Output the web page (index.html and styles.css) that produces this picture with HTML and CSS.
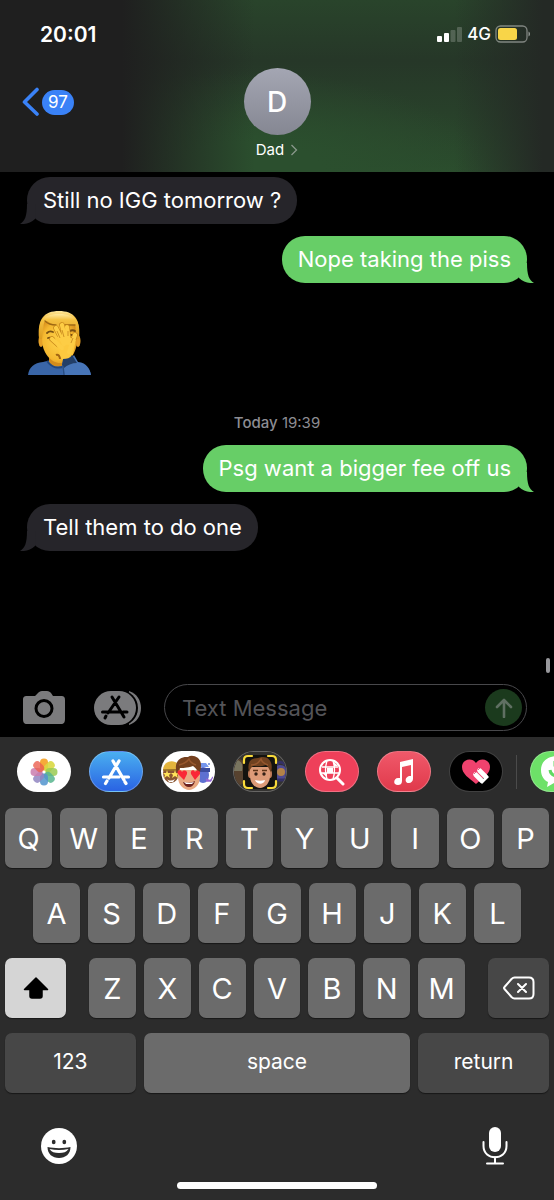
FILE: index.html
```html
<!DOCTYPE html>
<html lang="en">
<head>
    <meta charset="UTF-8">
    <meta name="viewport" content="width=device-width, initial-scale=1.0">
    <title>Dad - Messages</title>
    <link rel="stylesheet" href="styles.css">
</head>
<body>
<header class="header">
    <div class="status-bar">
        <span class="time">20:01</span>
        <div class="status-icons">
            <svg width="26" height="16" viewBox="0 0 26 16">
                <rect x="0" y="10" width="5" height="6" rx="1" fill="#fff"/>
                <rect x="7" y="7" width="5" height="9" rx="1" fill="#fff"/>
                <rect x="13.500" y="4" width="5" height="12" rx="1" fill="#fff" opacity=".2"/>
                <rect x="20" y="1" width="5" height="15" rx="1" fill="#fff" opacity=".2"/>
            </svg>
            <span class="network">4G</span>
            <svg width="36" height="18" viewBox="0 0 36 18">
                <rect x="1" y="1" width="31" height="16" rx="4.500" fill="none" stroke="#fff" stroke-opacity=".42" stroke-width="1.300"/>
                <rect x="3" y="3" width="19" height="12" rx="2.500" fill="#f8d548"/>
                <path d="M33.500 6.500c2 .7 2 4.300 0 5z" fill="#fff" opacity=".5"/>
            </svg>
        </div>
    </div>
    <div class="nav-bar">
        <button type="button" class="back" aria-label="Back, 97 unread">
            <svg width="18" height="30" viewBox="0 0 18 30"><path d="M15 2.500L2.500 15 15 27" fill="none" stroke="#3a82f7" stroke-width="3.600" stroke-linecap="round" stroke-linejoin="round"/></svg>
            <span class="unread">97</span>
        </button>
        <button type="button" class="contact">
            <span class="avatar">D</span>
            <span class="contact-name">Dad
                <svg width="8" height="12" viewBox="0 0 8 12"><path d="M1.500 1L6.500 6 1.500 11" fill="none" stroke="#8a988b" stroke-width="1.300"/></svg>
            </span>
        </button>
    </div>
</header>

<main class="messages">
    <p class="bubble received">Still no IGG tomorrow ?
        <svg class="tail" viewBox="0 0 16 20"><path d="M9 0C9 12 11 17 16 20 11 20.500 5 19 1 15L0 0z"/></svg>
    </p>
    <p class="bubble sent">Nope taking the piss
        <svg class="tail" viewBox="0 0 16 20"><path d="M9 0C9 12 11 17 16 20 11 20.500 5 19 1 15L0 0z"/></svg>
    </p>
    <!-- facepalm -->
    <svg class="facepalm" viewBox="0 0 64 66" role="img" aria-label="Man facepalming">
        <defs>
            <linearGradient id="hair" x1="0" y1="0" x2="0" y2="1">
                <stop offset="0" stop-color="#ffe9a0"/>
                <stop offset=".25" stop-color="#f5c242"/>
                <stop offset="1" stop-color="#dd9d20"/>
            </linearGradient>
            <radialGradient id="skin" cx=".45" cy=".5" r=".6">
                <stop offset="0" stop-color="#ffd24a"/>
                <stop offset=".7" stop-color="#f5b931"/>
                <stop offset="1" stop-color="#d98f1c"/>
            </radialGradient>
        </defs>
        <path d="M0 65c1-8 6-12 15-13l12-3 12 2c12 1 23 5 24 14z" fill="#3a66a8"/>
        <path d="M21 46h18v6c-4 6-15 6-18 0z" fill="#d38c1d"/>
        <path d="M19 51c5 7 12 8 18 5" fill="none" stroke="#23487f" stroke-width="2"/>
        <ellipse cx="13" cy="31" rx="2.500" ry="6" fill="#e6a027"/>
        <ellipse cx="50" cy="31" rx="2.500" ry="6" fill="#e6a027"/>
        <path d="M11 29C9 9 16 1 31 1s22 8 20 28z" fill="url(#hair)"/>
        <path d="M16 12c7-2 25-2 31 1l2 17c0 13-8 23-17 23S14 43 14 29z" fill="url(#skin)"/>
        <path d="M13 27c-1-7 1-12 5-17 7 6 17 7 29 5 3 3 4 7 3 12 3-14-1-23-19-23S9 13 13 27z" fill="url(#hair)"/>
        <path d="M17 11c3 3 7 4 11 4M47 15H37" fill="none" stroke="#9d6814" stroke-width="1.400" stroke-linecap="round"/>
        <path d="M19 23c2-2 4-2 6-1M20 28c2-1 4 0 6 1M42 21c1-1 4-1 5 0M42 25h4" fill="none" stroke="#795012" stroke-width="1.800" stroke-linecap="round"/>
        <path d="M28 45c2-1 4 1 4 4" fill="none" stroke="#a26513" stroke-width="2"/>
        <!-- hand over the face -->
        <g fill="none" stroke="#c58419" stroke-width="5.500" stroke-linecap="round">
            <path d="M34 38L24 29M36 34L28 18M38 33L34 15M41 33L39 17M41 42l6-17"/>
        </g>
        <path d="M27 28l8-4 8 4 5 2-3 14-4 7-7-1-5-13z" fill="#fcc93f"/>
        <g fill="none" stroke="#fdcd45" stroke-width="4.200" stroke-linecap="round">
            <path d="M34 38L24 29M36 34L28 18M38 33L34 15M41 33L39 17M41 42l6-17"/>
        </g>
        <path d="M32 28l-3-7M36 27l-2-7M40 26v-5M43 33l2-5" stroke="#c98b1f" stroke-width=".9" fill="none"/>
        <path d="M35 65l-1-11 2-5c4 1 8-1 10-4l4 7c9 1 12 7 13 13z" fill="#4775b8"/>
        <path d="M34 55l1-6c4 0 7-1 9-4l5 8c-5 0-10 2-13 5z" fill="#223e67"/>
        <path d="M36 65c0-3-1-6-1-9" stroke="#294d84" stroke-width="1.500"/>
    </svg>
    <p class="timestamp"><strong>Today</strong> 19:39</p>
    <p class="bubble sent">Psg want a bigger fee off us
        <svg class="tail" viewBox="0 0 16 20"><path d="M9 0C9 12 11 17 16 20 11 20.500 5 19 1 15L0 0z"/></svg>
    </p>
    <p class="bubble received">Tell them to do one
        <svg class="tail" viewBox="0 0 16 20"><path d="M9 0C9 12 11 17 16 20 11 20.500 5 19 1 15L0 0z"/></svg>
    </p>
    <span class="scroll-thumb"></span>
</main>

<form class="compose">
    <button type="button" class="camera" aria-label="Camera">
        <svg width="42" height="34" viewBox="0 0 42 34">
            <path d="M4 5h8l3-3c1-1 2-2 4-2h5c2 0 3 1 4 2l2 3h8c3 0 4 1 4 4v19c0 3-1 5-4 5H4c-3 0-4-2-4-5V9c0-3 1-4 4-4z" fill="#7b7b7d"/>
            <circle cx="21" cy="17.500" r="8" fill="none" stroke="#000" stroke-width="3"/>
        </svg>
    </button>
    <button type="button" class="apps" aria-label="Apps">
        <svg width="48" height="34" viewBox="0 0 48 34">
            <path d="M35 0c16 5 16 29 0 34z" fill="#7b7b7d"/>
            <rect x="-1" y="-1" width="45" height="36" rx="18" fill="#000"/>
            <rect x="0" y="0" width="42" height="34" rx="17" fill="#7b7b7d"/>
            <path d="M18 6l12 20M25 6L14 22M8.500 21H25M29 21h4M12 25l-1 2" fill="none" stroke="#000" stroke-width="3" stroke-linecap="round"/>
        </svg>
    </button>
    <div class="text-field">
        <input type="text" id="message" name="message" aria-label="Text Message" placeholder="Text Message">
        <button type="submit" class="send" aria-label="Send">
            <svg width="18" height="20" viewBox="0 0 18 20"><path d="M9 19V2M2 9l7-7 7 7" fill="none" stroke="#5f6f62" stroke-width="2.600" stroke-linecap="round" stroke-linejoin="round"/></svg>
        </button>
    </div>
</form>

<section class="keyboard">
    <nav class="app-strip">
        <button type="button" class="app white" aria-label="Photos">
            <svg width="28" height="28" viewBox="-14 -14 28 28">
                <g opacity=".9">
                    <rect x="-4" y="-13.500" width="8" height="12" rx="4" fill="#f5a125"/>
                    <rect x="-4" y="-13.500" width="8" height="12" rx="4" fill="#d6d52f" opacity=".9" transform="rotate(45)"/>
                    <rect x="-4" y="-13.500" width="8" height="12" rx="4" fill="#8fc63f" opacity=".85" transform="rotate(90)"/>
                    <rect x="-4" y="-13.500" width="8" height="12" rx="4" fill="#45ae83" opacity=".85" transform="rotate(135)"/>
                    <rect x="-4" y="-13.500" width="8" height="12" rx="4" fill="#4089c9" opacity=".85" transform="rotate(180)"/>
                    <rect x="-4" y="-13.500" width="8" height="12" rx="4" fill="#8578bb" opacity=".85" transform="rotate(225)"/>
                    <rect x="-4" y="-13.500" width="8" height="12" rx="4" fill="#c66fa6" opacity=".85" transform="rotate(270)"/>
                    <rect x="-4" y="-13.500" width="8" height="12" rx="4" fill="#ea4f3d" opacity=".8" transform="rotate(315)"/>
                </g>
            </svg>
        </button>
        <button type="button" class="app blue" aria-label="App Store">
            <svg width="30" height="28" viewBox="0 0 30 28"><path d="M12 3l11 19M18 3L8 20M2.500 19H18M22 19h5.500M6 23l-1.500 2.500M24 24l1 1.500" fill="none" stroke="#fff" stroke-width="3.200" stroke-linecap="round"/></svg>
        </button>
        <button type="button" class="app white" aria-label="Memoji Stickers">
            <svg width="54" height="40" viewBox="0 0 54 40">
                <ellipse cx="10" cy="21" rx="8" ry="10" fill="#8b5632"/>
                <path d="M2 18c0-11 16-12 17-1z" fill="#e4b43c"/>
                <path d="M2 18h17" stroke="#9b7424" stroke-width="1.500"/>
                <path d="M6 18l1 3h3l-2 2 1 3-3-2-3 2 1-3-2-2h3zM14 18l1 3h3l-2 2 1 3-3-2-3 2 1-3-2-2h3z" fill="#ffe35a"/>
                <path d="M6 27c2 2 5 2 8 0l-2 3H8z" fill="#fff"/>
                <ellipse cx="42" cy="23" rx="6" ry="8" fill="#5d70d1"/>
                <path d="M37 15l2-4h6l3 4z" fill="#7495ec"/>
                <path d="M36 16h13v4H36z" fill="#3b4c9e"/>
                <path d="M45 27c5 3 5 1 7-2M45 29h6" fill="none" stroke="#9165d3" stroke-width="1.500"/>
                <circle cx="48" cy="12" r="1" fill="#6687d8"/>
                <path d="M17 18h22v7c0 8-6 13-11 13s-11-5-11-13z" fill="#e9a982"/>
                <path d="M16 22C12 10 19 4 27 5c4-3 13 0 13 8 0 4-1 7-2 9-1-3-3-6-6-8-6 2-11 2-13 2z" fill="#74401f"/>
                <path d="M18 13c5-1 8-3 10-6 1 3 4 5 7 6" fill="none" stroke="#97572e" stroke-width="1.500"/>
                <path d="M23 28l-6-6c-2-4 3-5 4-2 2-3 6-1 5 2zM34 28l-4-6c-1-4 3-5 4-2 2-3 6-1 5 2z" fill="#fa2736"/>
                <path d="M22 30c4 1 8 1 12-1-1 4-3 6-6 6s-5-2-6-5z" fill="#6b211e"/>
                <path d="M23 30c3 1 7 1 10 0l-2 2h-6z" fill="#fff"/>
            </svg>
        </button>
        <button type="button" class="app dark" aria-label="Memoji">
            <svg width="54" height="40" viewBox="0 0 54 40">
                <rect width="54" height="40" fill="#343331"/>
                <ellipse cx="6" cy="20" rx="7" ry="13" fill="#57422f"/>
                <path d="M4 8c5 1 6 5 5 11H0z" fill="#79755f"/>
                <circle cx="47" cy="21" r="8" fill="#4f4a91"/>
                <circle cx="48" cy="20" r="4" fill="#b48348"/>
                <path d="M43 13c3-4 7-3 9 0M44 28h8" fill="none" stroke="#353167" stroke-width="3"/>
                <rect x="10" y="3" width="34" height="34" rx="5" fill="#14130f"/>
                <ellipse cx="17" cy="22" rx="2" ry="4" fill="#c27c58"/>
                <ellipse cx="37" cy="22" rx="2" ry="4" fill="#c27c58"/>
                <path d="M17 15h20v9c0 7-5 12-10 12s-10-5-10-12z" fill="#dd9b78"/>
                <path d="M16 20c-2-9 1-14 9-14 10-4 16 4 13 14-2-2-2-5-5-7-5 2-10 1-13 1-2 2-3 3-4 6z" fill="#70411f"/>
                <path d="M18 13c6 0 8-3 10-6 1 4 4 5 7 6" fill="none" stroke="#96572e" stroke-width="1.500"/>
                <circle cx="23" cy="22" r="1.700" fill="#332015"/><circle cx="31" cy="22" r="1.700" fill="#332015"/>
                <path d="M20 18.500h5M29 18.500h5" stroke="#603618" stroke-width="1.300"/>
                <path d="M22 28c3 1 7 1 10 0-1 5-8 5-10 0z" fill="#fff"/>
                <path d="M11 11V8c0-3 1-4 4-4h4M35 4h4c3 0 4 1 4 4v3M43 29v3c0 3-1 4-4 4h-4M19 36h-4c-3 0-4-1-4-4v-3" fill="none" stroke="#f9db3b" stroke-width="2.200" stroke-linecap="round"/>
            </svg>
        </button>
        <button type="button" class="app pink" aria-label="Images">
            <svg width="28" height="28" viewBox="0 0 28 28">
                <circle cx="12" cy="12" r="10" fill="none" stroke="#fff" stroke-width="2"/>
                <path d="M4 9h16M3 15h18M9 3c-2 6-2 12 0 18M15 3c2 6 2 12 0 18" fill="none" stroke="#fff" stroke-width="1.300"/>
                <path d="M9 10h6v5H9zM4 15h5v4zM16 4l4 4h-4z" fill="#fff"/>
                <path d="M19 20l6 6" stroke="#fff" stroke-width="3" stroke-linecap="round"/>
            </svg>
        </button>
        <button type="button" class="app red" aria-label="Music">
            <svg width="26" height="28" viewBox="0 0 26 28">
                <path d="M9 4l13-3v20c0 2-2 4-4 4-5 0-4-6 0-7h2V7l-9 2v14c0 3-2 4-4 4-6 0-4-7 0-7h2z" fill="#fff"/>
            </svg>
        </button>
        <button type="button" class="app black" aria-label="Digital Touch">
            <svg width="28" height="26" viewBox="0 0 28 26">
                <path d="M14 25C7 19 0 15 0 8c0-8 10-10 14-4 4-6 14-4 14 4 0 7-7 11-14 17z" fill="#f0426e"/>
                <path d="M13.500 15.500l6 6M17.500 11.500l6 6" stroke="#fff" stroke-width="4.600" stroke-linecap="round"/>
                <path d="M18 23l7-7 2 2-7 7z" fill="#fff"/>
                <path d="M12 15l2-2M16 11l2-2" stroke="#e56786" stroke-width="1"/>
            </svg>
        </button>
        <span class="divider"></span>
        <button type="button" class="app green" aria-label="More messages">
            <svg width="34" height="32" viewBox="0 0 34 32">
                <path d="M17 0C7 0 1 6 1 14c0 6 3 10 7 12l-1 5 7-4c12 1 19-5 19-13S27 0 17 0z" fill="#fff"/>
                <path d="M15 5v4h5M10 14c1 7 9 7 14 4" fill="none" stroke="#5fda61" stroke-width="3"/>
            </svg>
        </button>
    </nav>

    <div class="key-row">
        <button type="button" class="key">Q</button>
        <button type="button" class="key">W</button>
        <button type="button" class="key">E</button>
        <button type="button" class="key">R</button>
        <button type="button" class="key">T</button>
        <button type="button" class="key">Y</button>
        <button type="button" class="key">U</button>
        <button type="button" class="key">I</button>
        <button type="button" class="key">O</button>
        <button type="button" class="key">P</button>
    </div>
    <div class="key-row middle">
        <button type="button" class="key">A</button>
        <button type="button" class="key">S</button>
        <button type="button" class="key">D</button>
        <button type="button" class="key">F</button>
        <button type="button" class="key">G</button>
        <button type="button" class="key">H</button>
        <button type="button" class="key">J</button>
        <button type="button" class="key">K</button>
        <button type="button" class="key">L</button>
    </div>
    <div class="key-row">
        <button type="button" class="key shift" aria-label="Shift">
            <svg width="26" height="22" viewBox="0 0 26 22"><path d="M13 1l11.500 11.500H19V19c0 1.500-.5 2-2 2H9c-1.500 0-2-.5-2-2v-6.500H1.500z" fill="#000" stroke="#000" stroke-width="1.500" stroke-linejoin="round"/></svg>
        </button>
        <button type="button" class="key">Z</button>
        <button type="button" class="key">X</button>
        <button type="button" class="key">C</button>
        <button type="button" class="key">V</button>
        <button type="button" class="key">B</button>
        <button type="button" class="key">N</button>
        <button type="button" class="key">M</button>
        <button type="button" class="key delete" aria-label="Delete">
            <svg width="32" height="24" viewBox="0 0 32 24"><path d="M11.500 1.500H26c3 0 4.500 1.500 4.500 4.500v12c0 3-1.500 4.500-4.500 4.500H11.500c-1 0-2-.5-3-1.500L1.500 13c-.7-.7-.7-1.300 0-2l7-8c1-1 2-1.500 3-1.500zM15 8l8 8M23 8l-8 8" fill="none" stroke="#fff" stroke-width="2" stroke-linecap="round" stroke-linejoin="round"/></svg>
        </button>
    </div>
    <div class="key-row">
        <button type="button" class="key wide">123</button>
        <button type="button" class="key space">space</button>
        <button type="button" class="key wide">return</button>
    </div>

    <div class="keyboard-footer">
        <button type="button" aria-label="Emoji">
            <svg width="36" height="36" viewBox="0 0 36 36">
                <circle cx="18" cy="18" r="18" fill="#fff"/>
                <ellipse cx="12.700" cy="14" rx="1.900" ry="2.300" fill="#2c2c2c"/>
                <ellipse cx="23.300" cy="14" rx="1.900" ry="2.300" fill="#2c2c2c"/>
                <path d="M6.500 19c7 1.500 16 1.500 23 0 0 7-5 11-11.500 11S6.500 26 6.500 19z" fill="#2c2c2c"/>
                <path d="M8.500 21c6 1.300 13 1.300 19 0-2 3-5 4-9.500 4s-7.500-1-9.500-4z" fill="#fff"/>
            </svg>
        </button>
        <button type="button" aria-label="Dictate">
            <svg width="26" height="38" viewBox="0 0 26 38">
                <rect x="7" y="0" width="12" height="25" rx="6" fill="#fff"/>
                <path d="M1.500 15v4c0 15 23 15 23 0v-4M13 30v6M5 36.500h16" fill="none" stroke="#fff" stroke-width="2" stroke-linecap="round"/>
            </svg>
        </button>
    </div>
    <div class="home-indicator"></div>
</section>
</body>
</html>
```
FILE: styles.css
```css
body {
    margin: 0;
    min-height: 100vh;
    display: flex;
    flex-direction: column;
    background-color: #000;
    color: #fff;
    font-family: Inter, "Liberation Sans", sans-serif;
    overflow-x: hidden;
}

*,
*::before,
*::after {
    box-sizing: border-box;
}

button {
    display: flex;
    align-items: center;
    justify-content: center;
    padding: 0;
    border: none;
    background: none;
    color: inherit;
    font-family: inherit;
    cursor: pointer;
}

svg {
    display: block;
    flex-shrink: 0;
}

p {
    margin: 0;
}

/* Header */
.header {
    height: 172px;
    background:
        linear-gradient(90deg, #1f1f1f 22%, rgba(31, 31, 31, 0) 46%),
        linear-gradient(270deg, #242925 2%, rgba(36, 41, 37, 0) 18%),
        radial-gradient(ellipse 240px 100px at 45% 100%, #2b4f2e 30%, rgba(43, 79, 46, 0) 100%),
        linear-gradient(180deg, #29442b 0%, #263728 35%, #28402a 65%, #2b4d2d 100%);
}

.status-bar {
    display: flex;
    justify-content: space-between;
    align-items: center;
    height: 68px;
    padding: 0 23px 0 40px;
}

.time {
    font-size: 21px;
    font-weight: 600;
}

.status-icons {
    display: flex;
    align-items: center;
    gap: 4px;
}

.network {
    font-size: 17px;
    font-weight: 500;
}

.nav-bar {
    display: grid;
    grid-template-columns: 1fr auto 1fr;
    align-items: start;
    padding: 0 22px;
}

.back {
    gap: 2px;
    height: 68px;
    justify-self: start;
}

.unread {
    padding: 0 6px;
    border-radius: 13px;
    background-color: #3a82f7;
    font-size: 17px;
    line-height: 25px;
}

.contact {
    flex-direction: column;
    gap: 6px;
}

.avatar {
    width: 67px;
    height: 67px;
    border-radius: 50%;
    background: linear-gradient(#a4a6b3, #858792);
    font-size: 28px;
    font-weight: 500;
    line-height: 68px;
}

.contact-name {
    display: flex;
    align-items: center;
    gap: 6px;
    font-size: 15px;
    line-height: 18px;
}

/* Messages */
.messages {
    position: relative;
    flex: 1;
    display: flex;
    flex-direction: column;
    gap: 12px;
    padding: 5px 27px;
}

.bubble {
    position: relative;
    padding: 0 16px;
    border-radius: 23px;
    font-size: 22px;
    line-height: 47px;
}

.received {
    align-self: flex-start;
    background-color: #26252a;
    color: #fff;
}

.sent {
    align-self: flex-end;
    background-color: #67ce67;
}

.tail {
    position: absolute;
    right: -7px;
    bottom: 0;
    width: 16px;
    height: 20px;
    fill: #67ce67;
}

.received .tail {
    right: auto;
    left: -7px;
    fill: #26252a;
    transform: scaleX(-1);
}

.facepalm {
    width: 64px;
    height: 66px;
    margin: 15px 0 0 1px;
}

.timestamp {
    margin-top: 25px;
    color: #8d8d93;
    font-size: 15px;
    line-height: 20px;
    text-align: center;
}

.timestamp strong {
    font-weight: 500;
}

.scroll-thumb {
    position: absolute;
    right: 4px;
    bottom: 6px;
    width: 4px;
    height: 15px;
    border-radius: 2px;
    background-color: #98989c;
}

/* Compose bar */
.compose {
    display: flex;
    align-items: center;
    padding: 5px 27px 6px 23px;
}

.apps {
    margin: 0 22px 0 29px;
}

.text-field {
    flex: 1;
    min-width: 0;
    display: flex;
    align-items: center;
    height: 47px;
    padding: 0 4px 0 17px;
    border: 1px solid #48484b;
    border-radius: 24px;
}

.text-field input {
    flex: 1;
    min-width: 0;
    padding: 0;
    border: none;
    outline: none;
    background: none;
    color: #fff;
    font-family: inherit;
    font-size: 22px;
}

.text-field input::placeholder {
    color: #545458;
    opacity: 1;
}

.send {
    flex-shrink: 0;
    width: 37px;
    height: 37px;
    border-radius: 50%;
    background-color: #1b3a1d;
}

/* Keyboard */
.keyboard {
    padding-bottom: 11px;
    background-color: #2c2c2c;
    overflow: hidden;
}

.app-strip {
    display: flex;
    align-items: center;
    gap: 18px;
    padding: 14px 0 16px 17px;
}

.app {
    flex-shrink: 0;
    width: 54px;
    height: 41px;
    border: 1px solid rgba(255, 255, 255, 0.25);
    border-radius: 21px;
    overflow: hidden;
}

.white {
    background-color: #fff;
}

.blue {
    background: linear-gradient(#4aaff0, #2a63e3);
}

.dark {
    background-color: #343331;
}

.pink {
    background-color: #ee405a;
}

.red {
    background: linear-gradient(#f0596a, #e0394b);
}

.black {
    background-color: #000;
}

.green {
    background-color: #6de168;
}

.divider {
    flex-shrink: 0;
    width: 1px;
    height: 34px;
    margin: 0 -5px;
    background-color: #4b4b4b;
}

.key-row {
    display: flex;
    gap: 8px;
    padding: 0 5px;
    margin-bottom: 15px;
}

.key-row.middle {
    padding: 0 33px;
}

.key {
    flex: 1;
    height: 60px;
    border-radius: 7px;
    background-color: #6b6b6b;
    box-shadow: 0 1px 1px #181818;
    font-size: 29px;
    font-weight: 400;
}

.shift,
.delete {
    flex: 0 0 61px;
    background-color: #474747;
}

.shift {
    margin-right: 15px;
    background-color: #d5d5d5;
}

.delete {
    margin-left: 15px;
}

.wide {
    background-color: #474747;
}

.wide,
.space {
    padding-bottom: 3px;
    font-size: 21px;
}

.space {
    flex: 0 0 49%;
}

.keyboard-footer {
    display: flex;
    justify-content: space-between;
    align-items: center;
    height: 74px;
    padding: 2px 46px 0 41px;
}

.home-indicator {
    width: 36%;
    height: 7px;
    margin: 0 auto;
    border-radius: 4px;
    background-color: #fff;
}
```
